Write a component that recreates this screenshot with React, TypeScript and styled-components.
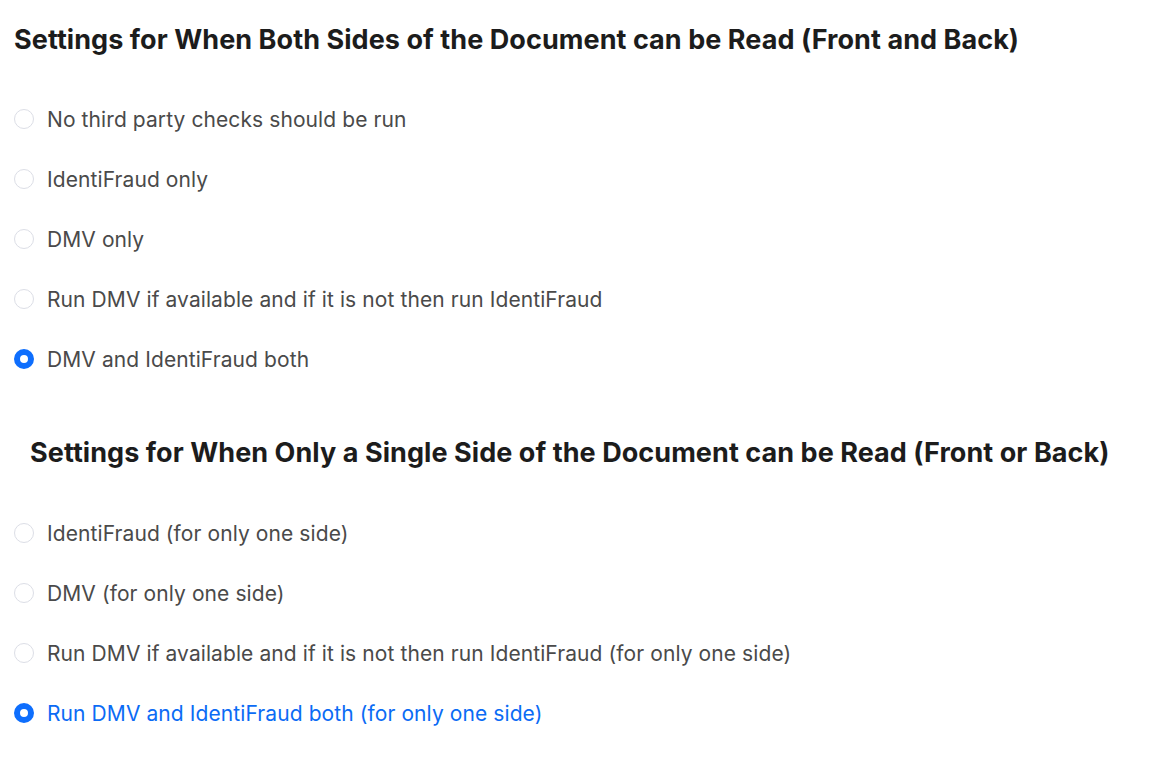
import styled, { createGlobalStyle } from 'styled-components';

const GlobalStyle = createGlobalStyle`
  body {
    margin: 0;
    background: #ffffff;
    font-family: Inter, "Liberation Sans", sans-serif;
  }
`;

const Page = styled.div`
  display: flex;
  flex-flow: column nowrap;
  padding: 22px 0 0 14px;
`;

const Section = styled.section`
  display: flex;
  flex-flow: column nowrap;
`;

const SectionHeader = styled.h2<{ indent?: number }>`
  margin: 0 0 ${({ indent }) => (indent ? 47 : 46)}px
    ${({ indent }) => indent ?? 0}px;
  font-size: 27px;
  font-weight: 700;
  line-height: 36px;
  letter-spacing: 0.06px;
  color: #1c1c1c;
  white-space: nowrap;
`;

const OptionList = styled.div`
  display: flex;
  flex-flow: column nowrap;
  gap: 30px;
  margin-bottom: 61px;
`;

const Option = styled.label<{ checked?: boolean }>`
  display: flex;
  flex-flow: row nowrap;
  align-items: center;
  gap: 13px;
  height: 30px;
  font-size: 21px;
  letter-spacing: 0.09px;
  color: ${({ checked }) => (checked ? '#0b6bf5' : '#4a4a4a')};
  cursor: pointer;
`;

const RadioCircle = styled.span<{ checked?: boolean }>`
  box-sizing: border-box;
  flex: 0 0 20px;
  width: 20px;
  height: 20px;
  border-radius: 50%;
  background: #ffffff;
  border: ${({ checked }) =>
    checked ? '6px solid #0e6efd' : '1px solid #dcdee6'};
`;

interface RadioGroupProps {
  options: string[];
  selected: number;
  highlight?: boolean;
}

const RadioGroup = ({ options, selected, highlight = false }: RadioGroupProps): JSX.Element => (
  <OptionList>
    {options.map((label, i) => (
      <Option key={label} checked={highlight && i === selected}>
        <RadioCircle checked={i === selected} />
        {label}
      </Option>
    ))}
  </OptionList>
);

const bothSides = [
  'No third party checks should be run',
  'IdentiFraud only',
  'DMV only',
  'Run DMV if available and if it is not then run IdentiFraud',
  'DMV and IdentiFraud both',
];

const singleSide = [
  'IdentiFraud (for only one side)',
  'DMV (for only one side)',
  'Run DMV if available and if it is not then run IdentiFraud (for only one side)',
  'Run DMV and IdentiFraud both (for only one side)',
];

const App = (): JSX.Element => (
  <>
    <GlobalStyle />
    <Page>
      <Section>
        <SectionHeader>
          Settings for When Both Sides of the Document can be Read (Front and Back)
        </SectionHeader>
        <RadioGroup options={bothSides} selected={4} />
      </Section>
      <Section>
        <SectionHeader indent={16}>
          Settings for When Only a Single Side of the Document can be Read (Front or Back)
        </SectionHeader>
        <RadioGroup options={singleSide} selected={3} highlight />
      </Section>
    </Page>
  </>
);

export default App;
